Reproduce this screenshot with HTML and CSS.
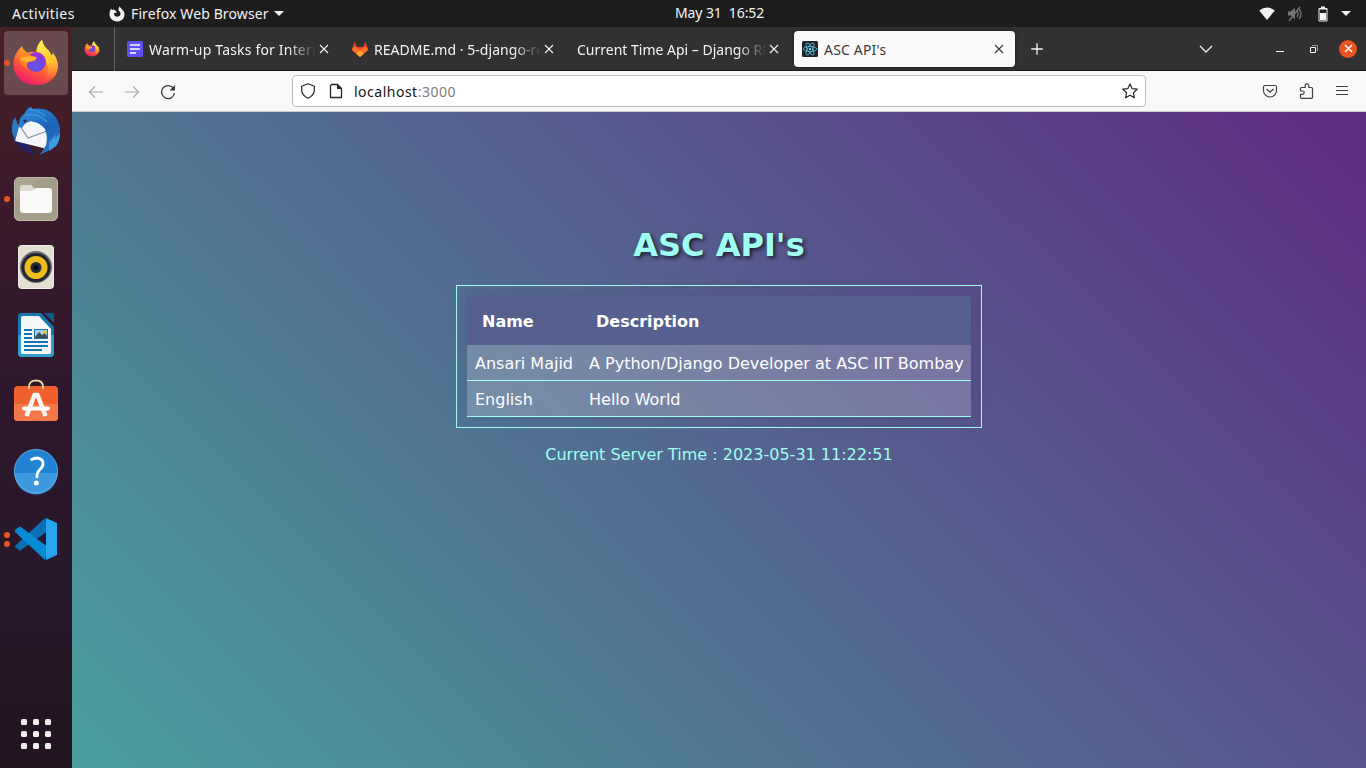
FILE: index.html
```html
<!DOCTYPE html>
<html lang="en">
<head>
<meta charset="utf-8">
<title>ASC API's</title>
<link rel="stylesheet" href="styles.css">
</head>
<body>
<svg width="0" height="0" class="defs" aria-hidden="true">
  <defs>
    <linearGradient id="fx-body" x1=".8" y1="0" x2=".3" y2="1"><stop offset="0" stop-color="#fff44f"/><stop offset=".35" stop-color="#ffb029"/><stop offset=".65" stop-color="#ff5a36"/><stop offset="1" stop-color="#ee1670"/></linearGradient>
    <linearGradient id="fx-tail" x1=".4" y1="0" x2=".6" y2="1"><stop offset="0" stop-color="#fff04d"/><stop offset=".55" stop-color="#ffc532"/><stop offset="1" stop-color="#ff7139" stop-opacity="0"/></linearGradient>
    <radialGradient id="fx-globe" cx=".5" cy=".7" r=".7"><stop offset="0" stop-color="#5d5fe0"/><stop offset=".5" stop-color="#7542e5"/><stop offset="1" stop-color="#b02cc4"/></radialGradient>
    <linearGradient id="tb" x1=".2" y1="0" x2=".8" y2="1"><stop offset="0" stop-color="#2a8ad8"/><stop offset=".55" stop-color="#1f62b8"/><stop offset="1" stop-color="#2b79c5"/></linearGradient>
    <symbol id="firefox" viewBox="0 0 48 48">
      <path d="M5 13 Q7 10 10 7 Q11 11 16 14 Q20 12 24 13 Q25 5 30 1 Q31 7 37 12 L40 17 41 14 Q46 21 46 28 C45 40 35 46 24 46 C11 46 2 38 1.500 26 Q1.500 17 5 13Z" fill="url(#fx-body)"/>
      <path d="M30 1 Q31 7 37 12 L40 17 41 14 Q46 21 46 28 Q43 40 30 42 Q38 36 36 27 Q33 17 25 13 Q25 5 30 1Z" fill="url(#fx-tail)"/>
      <circle cx="24" cy="23" r="10" fill="url(#fx-globe)"/>
      <path d="M7 20 Q10 12 16 14 Q18 17 24 18 Q25 20 22 22 Q19 23 17 23 Q14 24 15 29 Q8 26 7 20Z" fill="#ff8524"/>
      <path d="M8 19 Q15 16 24 18 Q25 20 22 21.500 Q18 22 16 23 Q11 23 8 19Z" fill="#ffb52a"/>
    </symbol>
    <symbol id="close" viewBox="0 0 10 10"><path d="M1 1 9 9M9 1 1 9" fill="none" stroke="currentColor" stroke-width="1.100"/></symbol>
  </defs>
</svg>

<header class="topbar">
  <div class="topbar-left">
    <span class="activities">Activities</span>
    <svg class="app-mark" width="16" height="16" viewBox="0 0 16 16"><path d="M2 2.500 3 4Q3.800 3.300 5 3.500 L6.800 4.900 8 6.200 6.400 7 5 7Q5 11 8.500 10.800 Q11.800 10.200 11.500 7 Q11 5.300 9.500 4.600 Q9.200 2 10.700 .3 Q11.100 2 13 3.300 Q15.700 5.500 15.500 9 C15 13.300 12 15.500 8 15.500 C4 15.500 .8 12.500 .5 8.600 Q.4 4.900 2 2.500Z" fill="#f2f2f2"/></svg>
    <span class="appname">Firefox Web Browser</span>
    <i class="caret"></i>
  </div>
  <div class="clock">May 31&nbsp; 16:52</div>
  <div class="tray">
    <svg width="16" height="14" viewBox="0 0 16 14"><path d="M.2 3.500 Q8-2.500 15.800 3.500 L8 13Z" fill="#f2f2f2"/></svg>
    <svg width="16" height="16" viewBox="0 0 16 16"><path d="M1 5.500h3l4-4v12l-4-4H1z" fill="#77756f"/><path d="M10 5q2 3 0 6M12 3q4 5 0 10M2 15 13 1" fill="none" stroke="#77756f" stroke-width="1.300"/></svg>
    <svg width="10" height="16" viewBox="0 0 10 16"><path d="M3 .5h4V2h1.500q1 0 1 1v11.500q0 1-1 1h-7q-1 0-1-1V3q0-1 1-1H3z" fill="#f2f2f2"/><path d="M1.500 3.500h7v11h-7z" fill="#1d1d1d"/><path d="M2 7h6v7H2z" fill="#f2f2f2"/></svg>
    <i class="caret"></i>
  </div>
</header>

<div class="desktop">
  <nav class="dock">
    <div class="dock-item active"><i class="dot"></i><svg width="48" height="48"><use href="#firefox"/></svg></div>
    <div class="dock-item"><svg width="50" height="50" viewBox="0 0 50 50">
      <path d="M3 13 Q0 26 5 36 Q12 48 27 49 Q20 46 19 41 L14 36 8 30Z" fill="#241f68"/>
      <path d="M4 35 8 18 20 15 38 19 36 43Z" fill="#f5f6fa"/><path d="m9 20 8 12 19-7" fill="none" stroke="#8e929c" stroke-width="1.200"/>
      <path d="M4 11Q0 18 1 26L4 35 8 21Z" fill="#277cc5"/>
      <path d="M8 21 Q7 12 14 7 Q16 2 20 1 L22 3 Q34 1 42 8 Q50 17 49 27 Q49 35 45 40 L39 44 28 49 Q33 44 35 39 Q37 31 34 23 Q28 16 20 15 Q14 16 11 22Z" fill="url(#tb)"/>
      <path d="M18 3q10 1 16 7M15 9q13-2 21 7" fill="none" stroke="#3f9bdc" stroke-width="1.200"/><path d="m49 27-5 6 1-5-7 9v8l7-5q4-6 4-13Z" fill="#3d9ddd"/><circle cx="14" cy="15" r="1.600" fill="#2b2b45"/></svg></div>
    <div class="dock-item"><i class="dot"></i><svg width="48" height="48" viewBox="0 0 48 48">
      <rect x="2.500" y="2.500" width="43" height="43" rx="4.500" fill="#a49d89" stroke="#c0baa8"/><path d="M4 4h22L4 25z" fill="#fff" opacity=".08"/>
      <path d="M8 13q0-3 3-3h8l4 4h14v5H8z" fill="#dfdcd3"/><path d="M8 16h12l4-3h13q3 0 3 3v19q0 3-3 3H11q-3 0-3-3z" fill="#faf9f7"/></svg></div>
    <div class="dock-item"><svg width="48" height="48" viewBox="0 0 48 48">
      <rect x="6.500" y="2.500" width="35" height="43" rx="3" fill="#e3dfd3" stroke="#f0ede5"/><circle cx="24" cy="24" r="16" fill="#6a6b6c"/><circle cx="24" cy="24.500" r="14.500" fill="#232432"/><circle cx="24" cy="24.500" r="11.500" fill="#edbd1e"/><circle cx="24" cy="24.500" r="5.500" fill="#272a37"/><circle cx="24" cy="24.500" r="2.500" fill="#08090f"/></svg></div>
    <div class="dock-item"><svg width="48" height="48" viewBox="0 0 48 48">
      <path d="M9 2h20l13 14v26q0 4-4 4H10q-4 0-4-4V6q0-4 3-4z" fill="#1677b0"/><path d="M6 24h36v18q0 4-4 4H10q-4 0-4-4z" fill="#379bd0"/><path d="M11 5h16l12 13v23q0 2-2 2H11q-2 0-2-2V7q0-2 2-2z" fill="#f5f6f7"/><path d="M32 2h8q2 0 2 2v8z" fill="#125b8b"/>
      <path d="M12 19h8M12 23h8M12 27h8M12 31h24M12 35h24M12 39h18" stroke="#1477b1" stroke-width="2"/><path d="M22 18h14v10H22z" fill="#1477b1"/><path d="M23 19h12v8H23z" fill="#a9d0e8"/><path d="m23 26 4-5 3 3 3-2 2 3v2H23z" fill="#444d55"/><circle cx="33" cy="21" r="1.500" fill="#efc500"/></svg></div>
    <div class="dock-item"><svg width="48" height="48" viewBox="0 0 48 48">
      <rect x="2" y="7" width="44" height="35" rx="4" fill="#f0602c"/><path d="M2 25h44v13.500q0 3.500-3.500 3.500h-37Q2 42 2 38.500z" fill="#f5784a"/><path d="M17 10V8q0-6.500 7-6.500T31 8v2" fill="none" stroke="#e5d6ac" stroke-width="1.800"/>
      <path d="m14.500 37 8-21h3l8 21" fill="none" stroke="#f8f4f0" stroke-width="4.500"/><path d="M12 29.500h24" stroke="#fff" stroke-width="4" stroke-linecap="round"/></svg></div>
    <div class="dock-item"><svg width="48" height="48" viewBox="0 0 48 48">
      <circle cx="24" cy="24" r="21.700" fill="#2282d4"/><path d="M2.500 26h43a21.500 21.500 0 0 1-43 0z" fill="#3d98dd"/><circle cx="24" cy="24" r="21.600" fill="none" stroke="#68aedf" stroke-width=".8"/>
      <path d="M18.500 13q4-2 7-2 6 1 5.500 6 0 3-3.500 6-3 3-2.500 8" fill="none" stroke="#fff" stroke-width="2.800"/><circle cx="24.300" cy="36" r="2.500" fill="#fff"/></svg></div>
    <div class="dock-item"><i class="dot double"></i><svg width="48" height="48" viewBox="0 0 48 48">
      <path d="m3 31 30-28 3 13L9 35q-1 1-2 0l-4-3z" fill="#0870b5"/><path d="m3 15 4-3q1-1 2 0l27 20-3 13L3 17z" fill="#078bd3"/><path d="M34 3 45 8v32l-11 5z" fill="#29a5ee"/></svg></div>
    <div class="apps-button"><i></i><i></i><i></i><i></i><i></i><i></i><i></i><i></i><i></i></div>
  </nav>

  <main class="browser">
    <div class="tabs">
      <div class="pinned"><svg width="16" height="16"><use href="#firefox"/></svg></div>
      <div class="tab">
        <svg width="16" height="16" viewBox="0 0 16 16"><rect width="16" height="16" rx="1.500" fill="#6050f2"/><path d="M3 4h10M3 8h10M3 12h6" stroke="#fff" stroke-width="1.500"/></svg>
        <span class="tab-title fade">Warm-up Tasks for Intern</span><svg class="x" width="10" height="10"><use href="#close"/></svg>
      </div>
      <div class="tab">
        <svg width="16" height="16" viewBox="0 0 16 16"><path d="M2.500.5 5 6h6L13.500.5 16 9 8 16 0 9z" fill="#e24329"/><path d="M0 9 1.300 5.500Q4 5.500 8 9q4-3.500 6.700-3.500L16 9l-8 7z" fill="#fc6d26"/><path d="m4 12.500 4-3 4 3L8 16z" fill="#fca326"/></svg>
        <span class="tab-title fade readme">README.md · 5-django-re</span><svg class="x" width="10" height="10"><use href="#close"/></svg>
      </div>
      <div class="tab">
        <span class="tab-title fade">Current Time Api – Django RE</span><svg class="x" width="10" height="10"><use href="#close"/></svg>
      </div>
      <div class="tab current">
        <svg width="16" height="16" viewBox="0 0 16 16"><rect width="16" height="16" rx="1.500" fill="#20232a"/><g fill="none" stroke="#5ac5df" stroke-width=".8"><ellipse cx="8" cy="8" rx="6.700" ry="2.600"/><ellipse cx="8" cy="8" rx="6.700" ry="2.600" transform="rotate(60 8 8)"/><ellipse cx="8" cy="8" rx="6.700" ry="2.600" transform="rotate(120 8 8)"/></g><circle cx="8" cy="8" r="1.200" fill="#61dafb"/></svg>
        <span class="tab-title">ASC API's</span><svg class="x" width="10" height="10"><use href="#close"/></svg>
      </div>
      <svg class="new-tab" width="12" height="12" viewBox="0 0 12 12"><path d="M6 .2v11.600M.2 6h11.600" stroke="#f3f3f3" stroke-width="1.300"/></svg>
      <div class="window-controls">
        <svg class="all-tabs" width="14" height="8" viewBox="0 0 14 8"><path d="m1 1 6 6 6-6" fill="none" stroke="#eee" stroke-width="1.300"/></svg>
        <svg class="minimise" width="8" height="8" viewBox="0 0 8 8"><path d="M0 6.500h8" stroke="#fff"/></svg>
        <svg class="restore" width="8" height="8" viewBox="0 0 8 8"><path d="M2 .5h5.500V6" fill="none" stroke="#999"/><path d="M.5 2.500h5v5h-5z" fill="none" stroke="#fff"/></svg>
        <div class="win-close"><svg width="9" height="9" viewBox="0 0 9 9"><path d="m1 1 7 7M8 1 1 8" stroke="#fff" stroke-width="1.500"/></svg></div>
      </div>
    </div>

    <div class="toolbar">
      <div class="history">
        <svg width="16" height="16" viewBox="0 0 16 16"><path d="M15 8H1.500M7 2.300 1.500 8 7 13.700" fill="none" stroke="#aaa" stroke-width="1.200"/></svg>
        <svg width="16" height="16" viewBox="0 0 16 16"><path d="M1 8h13.500M9 2.300 14.500 8 9 13.700" fill="none" stroke="#aaa" stroke-width="1.200"/></svg>
        <svg width="16" height="16" viewBox="0 0 16 16"><path d="M13.800 5A6.500 6.500 0 1 0 14.500 9" fill="none" stroke="#39383b" stroke-width="1.300"/><path d="M15 1v5.500H9.500z" fill="#39383b"/></svg>
      </div>
      <div class="urlbar">
        <svg width="16" height="16" viewBox="0 0 16 16"><path d="M8 .8 14.300 3.300V7q0 5.300-6.300 8.300Q1.700 12.300 1.700 7V3.300z" fill="none" stroke="#27262a" stroke-width="1.200" stroke-linejoin="round"/></svg>
        <svg class="page-icon" width="16" height="16" viewBox="0 0 16 16"><path d="M3.500 1.500h6l4 4v9H2.500v-12z" fill="none" stroke="#27262a" stroke-width="1.300" stroke-linejoin="round"/><path d="M9 1v5h5z" fill="#27262a"/></svg>
        <span class="address">localhost<span class="port">:3000</span></span>
        <svg class="star" width="16" height="16" viewBox="0 0 16 16"><path d="m8 .9 2.100 4.700 5.100.6-3.800 3.500 1 5.100L8 12.300l-4.400 2.500 1-5.100L.8 6.200l5.100-.6z" fill="none" stroke="#27262a" stroke-width="1.200" stroke-linejoin="round"/></svg>
      </div>
      <div class="actions">
        <svg width="16" height="16" viewBox="0 0 16 16"><path d="M3 2.500h10q1.500 0 1.500 1.500v3.500a6.500 6.500 0 0 1-13 0V4q0-1.500 1.500-1.500z" fill="none" stroke="#414045" stroke-width="1.200"/><path d="M4.500 6 8 9.200 11.500 6" fill="none" stroke="#414045" stroke-width="1.300"/></svg>
        <svg width="16" height="16" viewBox="0 0 16 16"><path d="M2.500 5.500q0-1 1-1h3.700V2.600q0-1.800 1.800-1.800t1.800 1.800v1.900h2.700q1 0 1 1v8.800q0 1-1 1h-10q-1 0-1-1v-3h2q1.700 0 1.700-1.700T4.500 8h-2z" fill="none" stroke="#414045" stroke-width="1.200" stroke-linejoin="round"/></svg>
        <svg width="16" height="16" viewBox="0 0 16 16"><path d="M2 3.500h12M2 7.500h12M2 11.500h12" stroke="#414045" stroke-width="1.200"/></svg>
      </div>
    </div>

    <section class="page">
      <h1 class="title">ASC API's</h1>
      <div class="table-frame">
        <table class="listing">
          <thead><tr><th>Name</th><th>Description</th></tr></thead>
          <tbody>
            <tr><td>Ansari Majid</td><td>A Python/Django Developer at ASC IIT Bombay</td></tr>
            <tr><td>English</td><td>Hello World</td></tr>
          </tbody>
        </table>
      </div>
      <p class="server-time">Current Server Time : 2023-05-31 11:22:51</p>
    </section>
  </main>
</div>
</body>
</html>
```
FILE: styles.css
```css
* { box-sizing: border-box; }
body { margin: 0; width: 1366px; height: 768px; overflow: hidden; display: flex; flex-direction: column; font: 14px/20px "Noto Sans", sans-serif; background: #1d1d1d; }
svg { display: block; flex: none; }
.defs { position: absolute; }

.topbar { flex: none; height: 27px; display: grid; grid-template-columns: 675px auto 1fr; align-items: center; background: #1d1d1d; color: #f2f2f2; }
.topbar-left { display: flex; align-items: center; padding-left: 12px; }
.activities { width: 63px; white-space: nowrap; letter-spacing: .45px; }
.app-mark { margin: 0 6px 0 34px; }
.appname { width: 138px; white-space: nowrap; letter-spacing: .12px; }
.caret { width: 0; height: 0; border: 5px solid transparent; border-top-color: #f2f2f2; border-bottom: 0; margin-left: 5px; }
.clock { white-space: pre; letter-spacing: -.1px; margin-top: -1px; }
.tray { display: flex; justify-content: flex-end; align-items: center; padding-right: 15px; }
.tray svg + svg { margin-left: 12px; }
.tray svg:nth-of-type(3) { margin-left: 15px; }
.tray .caret { margin-left: 13px; }

.desktop { flex: 1; display: flex; min-height: 0; }
.dock { width: 72px; flex: none; display: flex; flex-direction: column; align-items: center; gap: 4px; padding: 4px 0 19px; background: linear-gradient(#482026, #3b1b2b 22%, #2e172d 50%, #28172b 75%, #22141f); }
.dock-item { width: 64px; height: 64px; display: flex; align-items: center; justify-content: center; position: relative; border-radius: 4px; }
.dock-item.active { background: #694a4e; }
.dot { position: absolute; left: 0; top: 29px; width: 6px; height: 6px; border-radius: 50%; background: #e95420; }
.dot.double { top: 25px; box-shadow: 0 9px #e95420; }
.apps-button { margin-top: auto; display: grid; grid-template-columns: repeat(3, 6px); gap: 6px; }
.apps-button i { height: 6px; border-radius: 1.5px; background: #f1f0ed; }

.browser { flex: 1; min-width: 0; display: flex; flex-direction: column; }
.tabs { height: 44px; flex: none; display: flex; align-items: center; background: #323031; border-bottom: 1px solid #1c1b1c; color: #f4f4f4; }
.pinned { width: 43px; height: 44px; padding: 0 0 0 12px; display: flex; align-items: center; border-right: 1px solid #656364; margin-right: 4px; }
.tab { width: 221px; height: 36px; margin-right: 4px; padding: 0 11px 0 8px; display: flex; align-items: center; border-radius: 4px; }
.tab-title { flex: 1; min-width: 0; margin: 2px 3px 0 6px; white-space: nowrap; letter-spacing: .18px; }
.tab-title:first-child { margin-left: 0; letter-spacing: 0; }
.tab-title.readme { letter-spacing: .05px; }
.fade { -webkit-mask-image: linear-gradient(to left, transparent, #000 28px); mask-image: linear-gradient(to left, transparent, #000 28px); }
.tab.current { background: #f9f9fa; color: #3b393d; box-shadow: 0 0 3px #0008; }
.new-tab { margin: 1px 0 0 12px; }
.window-controls { margin-left: auto; padding-right: 9px; display: flex; align-items: center; }
.minimise { margin-left: 63px; }
.restore { margin-left: 26px; }
.win-close { width: 18px; height: 18px; margin-left: 21px; border-radius: 50%; background: #e95420; display: flex; align-items: center; justify-content: center; }

.toolbar { height: 41px; flex: none; display: flex; align-items: center; background: #f9f9fa; border-bottom: 1px solid #ccc; }
.history { display: flex; gap: 20px; padding: 1px 0 0 16px; width: 220px; }
.urlbar { width: 854px; height: 32px; display: flex; align-items: center; padding: 0 7px; background: #fff; border: 1px solid #bdbdbf; border-radius: 4px; }
.page-icon { margin-left: 12px; }
.address { margin: 2px 0 0 10px; color: #17161a; letter-spacing: .5px; }
.port { color: #7d7c80; }
.star { margin-left: auto; }
.actions { margin-left: auto; padding-right: 16px; display: flex; gap: 20px; }

.page { flex: 1; padding-top: 115px; display: flex; flex-direction: column; align-items: center; background: linear-gradient(45deg, #49a09d, #5f2c82); color: #9ffff0; font: 16px/19px "DejaVu Sans", sans-serif; }
.title { margin: 0 0 21px; font-size: 32px; line-height: 37px; text-shadow: 2px 2px 4px #000000b3; }
.table-frame { width: 526px; padding: 10px; border: 1px solid #9ffff0; }
.listing { width: 504px; table-layout: fixed; border-collapse: separate; border-spacing: 0; color: #fff; box-shadow: 0 0 20px rgba(0, 0, 0, .1); }
.listing th { padding: 16px 15px 14px; text-align: left; background: #55608f; }
.listing td { padding: 9px 0 7px 8px; background: rgba(255, 255, 255, .2); border-bottom: 1px solid #9ffff0; white-space: nowrap; }
.listing th:first-child { width: 114px; }
.server-time { margin: 17px 0 0; }
```
